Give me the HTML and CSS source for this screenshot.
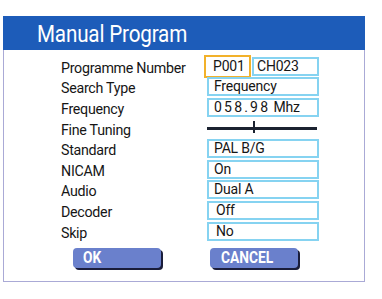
FILE: index.html
```html
<!DOCTYPE html>
<html>
<head>
<meta charset="utf-8">
<link rel="stylesheet" href="styles.css">
</head>
<body>
<div class="panel">
  <div class="header"><span class="title">Manual Program</span></div>
  <div class="body">
    <div class="rows">
      <div class="label">Programme Number</div>
      <div class="value pair">
        <div class="box sel">P001</div>
        <div class="box ch">CH023</div>
      </div>
      <div class="label">Search Type</div>
      <div class="value"><div class="box">Frequency</div></div>
      <div class="label">Frequency</div>
      <div class="value"><div class="box freq"><span class="digits">058.98</span> Mhz</div></div>
      <div class="label">Fine Tuning</div>
      <div class="value"><div class="slider"><div class="tick"></div></div></div>
      <div class="label">Standard</div>
      <div class="value"><div class="box">PAL B/G</div></div>
      <div class="label">NICAM</div>
      <div class="value"><div class="box">On</div></div>
      <div class="label">Audio</div>
      <div class="value"><div class="box">Dual A</div></div>
      <div class="label">Decoder</div>
      <div class="value"><div class="box indent">Off</div></div>
      <div class="label">Skip</div>
      <div class="value"><div class="box indent">No</div></div>
    </div>
    <div class="buttons">
      <div class="btn ok"><span class="btn-text">OK</span></div>
      <div class="btn cancel"><span class="btn-text">CANCEL</span></div>
    </div>
  </div>
</div>
</body>
</html>
```
FILE: styles.css
```css
html, body {
  margin: 0;
  padding: 0;
  background: #ffffff;
}
body {
  font-family: Roboto, "Liberation Sans", sans-serif;
  color: #161616;
}
.panel {
  margin: 16px 0 0 3px;
  width: 362px;
}
.header {
  height: 34px;
  background: #1d5cb9;
  display: flex;
  align-items: center;
  padding-left: 34px;
}
.title {
  color: #ffffff;
  font-size: 24px;
  display: inline-block;
  transform: scaleX(0.86);
  transform-origin: left center;
  letter-spacing: -0.2px;
  margin-top: 1px;
}
.body {
  border: 1px solid #aaaad6;
  border-top: none;
  padding: 6px 0 13px 0;
}
.rows {
  display: grid;
  grid-template-columns: 146px 112px;
  grid-auto-rows: 20.6px;
  padding-left: 57px;
  align-items: center;
}
.label {
  font-size: 15px;
  letter-spacing: -0.3px;
  padding-top: 3px;
  white-space: nowrap;
  transform: scaleX(0.95);
  transform-origin: left center;
}
.value {
  display: flex;
  align-items: center;
  height: 100%;
}
.box {
  box-sizing: border-box;
  width: 112px;
  height: 19px;
  border: 2px solid #86d3f1;
  font-size: 14px;
  line-height: 15px;
  padding-left: 5px;
  white-space: nowrap;
  letter-spacing: -0.2px;
}
.box.indent {
  padding-left: 7px;
}
.pair {
  gap: 1px;
}
.box.sel {
  width: 47px;
  height: 23px;
  margin-left: -3px;
  border-color: #f2b12a;
  line-height: 19px;
  padding-left: 7px;
}
.box.ch {
  width: 67px;
  padding-left: 3px;
}
.digits {
  letter-spacing: 2.2px;
}
.slider {
  width: 110px;
  height: 3px;
  background: #1b2230;
  position: relative;
  margin-top: 1px;
}
.tick {
  position: absolute;
  left: 46px;
  top: -6px;
  width: 2px;
  height: 12px;
  background: #1b2230;
}
.buttons {
  display: flex;
  gap: 49px;
  padding-left: 69px;
  margin-top: 7px;
}
.btn {
  width: 88px;
  height: 20px;
  background: #6a80cc;
  border-radius: 4px;
  box-shadow: 2px 2px 0 #1a1d3a;
  color: #ffffff;
  font-weight: bold;
  box-sizing: border-box;
  padding-left: 10px;
}
.btn-text {
  display: inline-block;
  font-size: 16px;
  line-height: 20px;
  transform: scaleX(0.86);
  transform-origin: left center;
}
.btn.cancel {
  padding-left: 11px;
}
```
